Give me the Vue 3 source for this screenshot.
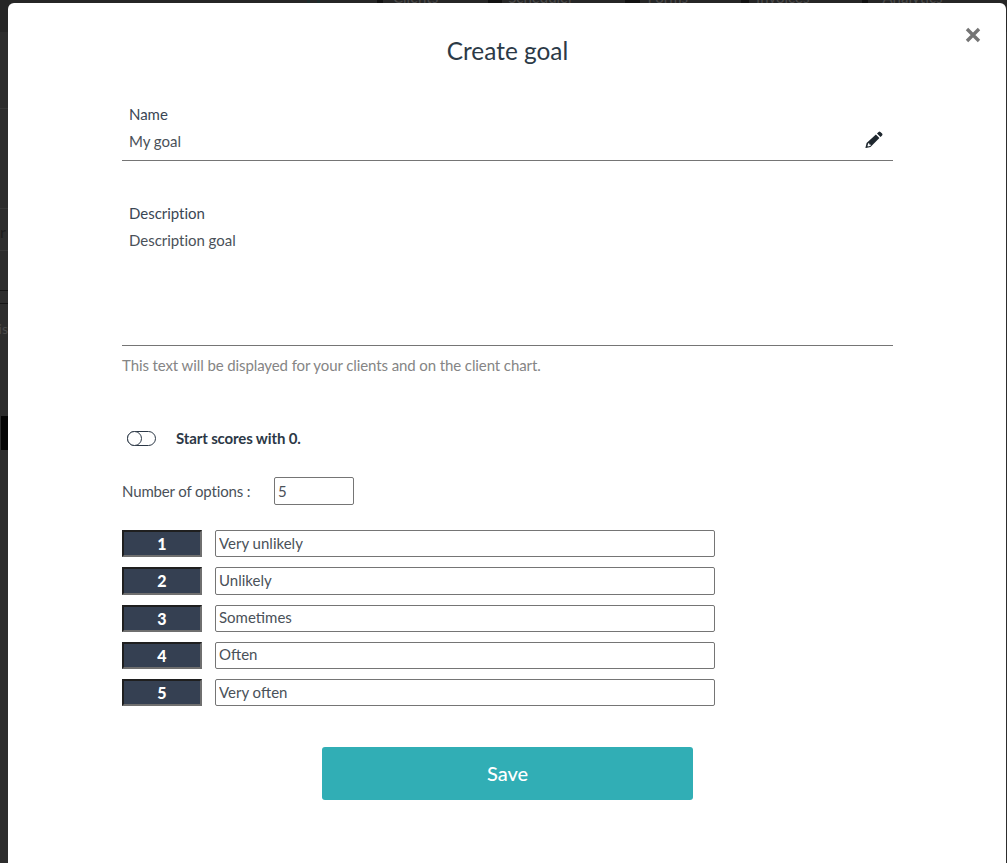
<script setup>
import { ref } from 'vue'

const navItems = [
  { label: 'Clients', ml: 57, iw: 6, gap: 10 },
  { label: 'Scheduler', ml: 50, iw: 14, gap: 6 },
  { label: 'Forms', ml: 52, iw: 15, gap: 7 },
  { label: 'Invoices', ml: 53, iw: 8, gap: 7 },
  { label: 'Analytics', ml: 53, iw: 6, gap: 14 },
]
const startZero = ref(false)
const count = ref(5)
const options = ref(['Very unlikely', 'Unlikely', 'Sometimes', 'Often', 'Very often'])
</script>

<template>
  <div class="page">
    <!-- dimmed app behind the modal -->
    <div class="backdrop">
      <div class="bd-nav">
        <div class="bd-logo"></div>
        <span
          v-for="n in navItems"
          :key="n.label"
          class="bd-item"
          :style="{ marginLeft: n.ml + 'px', gap: n.gap + 'px' }"
        ><i :style="{ width: n.iw + 'px' }"></i>{{ n.label }}</span>
      </div>
      <div class="bd-rule bd-faint" style="top: 108px"></div>
      <div class="bd-rule bd-faint" style="top: 208px"></div>
      <div class="bd-row bd-r1">r</div>
      <div class="bd-rule bd-faint" style="top: 250px"></div>
      <div class="bd-rule bd-dark" style="top: 290px"></div>
      <div class="bd-rule bd-dark" style="top: 303px"></div>
      <div class="bd-row bd-r4">is</div>
      <div class="bd-block"></div>
    </div>

    <div class="modal">
      <button class="close" aria-label="Close">
        <svg width="16" height="16" viewBox="0 0 16 16">
          <path d="M2 2 L14 14 M14 2 L2 14" stroke="#757575" stroke-width="3.4" fill="none" />
        </svg>
      </button>

      <h1 class="title">Create goal</h1>

      <div class="field name-field">
        <div class="label">Name</div>
        <div class="value">My goal</div>
        <svg class="pencil" width="18" height="18" viewBox="0 0 18 18">
          <path fill="#1e272e" fill-rule="evenodd" d="M13.6 0.9a1.3 1.3 0 0 1 1.8 0l1.7 1.7a1.3 1.3 0 0 1 0 1.8l-1.6 1.6-3.5-3.5zM10.9 3.6l3.5 3.5-8.9 8.9-4.5 1.1a0.4 0.4 0 0 1-0.5-0.5l1.1-4.5zM3.2 12.2l-0.7 2.9 0.4 0.4 2.9-0.7-0.3-1.2-1.2-0.1-0.1-1.2z" />
        </svg>
      </div>

      <div class="field desc-field">
        <div class="label">Description</div>
        <div class="value">Description goal</div>
      </div>
      <p class="hint">This text will be displayed for your clients and on the client chart.</p>

      <div class="toggle-row">
        <span class="toggle" :class="{ on: startZero }" @click="startZero = !startZero"><i></i></span>
        <span class="toggle-label">Start scores with 0.</span>
      </div>

      <div class="count-row">
        <label>Number of options :</label>
        <input class="count" v-model="count" />
      </div>

      <div class="options">
        <div v-for="(o, i) in options" :key="i" class="option">
          <span class="num">{{ i + 1 }}</span>
          <input class="opt-input" v-model="options[i]" />
        </div>
      </div>

      <button class="save">Save</button>
    </div>
  </div>
</template>

<style>
html, body { margin: 0; background: #2b2b2b; }
</style>

<style scoped>
.page {
  position: relative;
  width: 1007px;
  height: 863px;
  overflow: hidden;
  background: #2d2d2d;
  font-family: Lato, "Liberation Sans", sans-serif;
}

/* ── backdrop ── */
.backdrop {
  position: absolute;
  inset: 0;
  color: #555;
  font-size: 14px;
}
.bd-nav {
  height: 42px;
  background: #262626;
  display: flex;
  align-items: flex-start;
  padding-left: 307px;
  margin-top: -10px;
  box-sizing: border-box;
  color: #4a4a4a;
  line-height: 14px;
}
.bd-logo {
  box-sizing: border-box;
  width: 13px;
  height: 13px;
  border: solid #1c2b2b;
  border-width: 0 3px;
}
.bd-item { display: flex; font-size: 15px; }
.bd-item i { display: block; height: 13px; background: #111; }
.bd-row { position: absolute; left: 0; width: 8px; overflow: hidden; }
.bd-r1 { top: 222px; font-size: 16px; color: #1b1b1b; }
.bd-r4 { top: 320px; left: -5px; width: 13px; color: #4a4a4a; text-align: right; }
.bd-rule { position: absolute; left: 0; width: 8px; height: 1px; }
.bd-dark { background: #151515; }
.bd-faint { background: #383838; }
.bd-block {
  position: absolute;
  left: 1px;
  top: 416px;
  width: 7px;
  height: 34px;
  background: #050505;
}

/* ── modal ── */
.modal {
  position: absolute;
  left: 8px;
  top: 3px;
  width: 998px;
  height: 860px;
  box-sizing: border-box;
  padding: 0 113px 0 114px;
  background: #fff;
  border-radius: 6px 6px 0 0;
  color: #2c3846;
}
.close {
  position: absolute;
  top: 24px;
  right: 25px;
  padding: 0;
  border: 0;
  background: none;
  line-height: 0;
}
.title {
  margin: 0;
  padding-top: 32px;
  height: 66px;
  box-sizing: content-box;
  text-align: center;
  font-size: 24.4px;
  line-height: 32px;
  font-weight: 400;
  color: #2c3a47;
}
.field {
  position: relative;
  padding: 0 7px;
  border-bottom: 1px solid #757575;
  font-size: 15px;
  line-height: 27px;
  letter-spacing: -0.03px;
}
.name-field { height: 63px; margin-top: -3px; box-sizing: border-box; padding-top: 3px; }
.desc-field { height: 146px; margin-top: 39px; box-sizing: border-box; }
.label { color: #3a4654; }
.value { color: #4a5159; }
.pencil { position: absolute; right: 10px; top: 33px; }
.hint {
  margin: 10px 0 0;
  font-size: 15px;
  line-height: 18px;
  letter-spacing: -0.1px;
  color: #858585;
}
.toggle-row {
  display: flex;
  align-items: center;
  gap: 20px;
  margin-top: 54px;
  padding-left: 5px;
  height: 20px;
}
.toggle {
  position: relative;
  display: block;
  box-sizing: border-box;
  width: 29px;
  height: 15px;
  border: 1px solid #2c3846;
  border-radius: 8px;
  cursor: pointer;
}
.toggle i {
  position: absolute;
  left: -1px;
  top: -1px;
  box-sizing: border-box;
  width: 15px;
  height: 15px;
  border: 1px solid #2c3846;
  border-radius: 50%;
  background: #fff;
}
.toggle.on i { left: 13px; }
.toggle-label {
  font-size: 15px;
  font-weight: 700;
  letter-spacing: -0.13px;
  color: #2c3846;
}
.count-row {
  display: flex;
  align-items: center;
  margin-top: 29px;
  font-size: 15px;
  color: #4a5159;
}
.count-row label { width: 152px; letter-spacing: -0.15px; margin-top: -1px; }
.count {
  box-sizing: border-box;
  width: 80px;
  height: 28px;
  padding: 0 3px 1px;
  border: 1px solid #757575;
  border-radius: 2px;
  font: inherit;
  color: #4a5159;
}
.options {
  display: flex;
  flex-direction: column;
  gap: 10px;
  margin-top: 25px;
}
.option {
  display: flex;
  gap: 13px;
  height: 27.25px;
}
.num {
  box-sizing: border-box;
  width: 80px;
  height: 100%;
  display: flex;
  align-items: center;
  justify-content: center;
  background: #354052;
  border: 2px solid;
  border-color: #1f1f1f #6f6f6f #6f6f6f #1f1f1f;
  color: #fff;
  font-size: 16px;
  font-weight: 900;
}
.opt-input {
  box-sizing: border-box;
  width: 500px;
  height: 100%;
  padding: 0 3px 2px;
  border: 1px solid #757575;
  border-radius: 2px;
  font: inherit;
  font-size: 15px;
  color: #4a5159;
}
.save {
  display: block;
  width: 371px;
  height: 53px;
  margin: 41px auto 0;
  padding: 0 0 2px;
  border: 0;
  border-radius: 3px;
  background: #31aeb5;
  color: #fff;
  font: inherit;
  font-size: 20px;
  font-weight: 500;
}
</style>
